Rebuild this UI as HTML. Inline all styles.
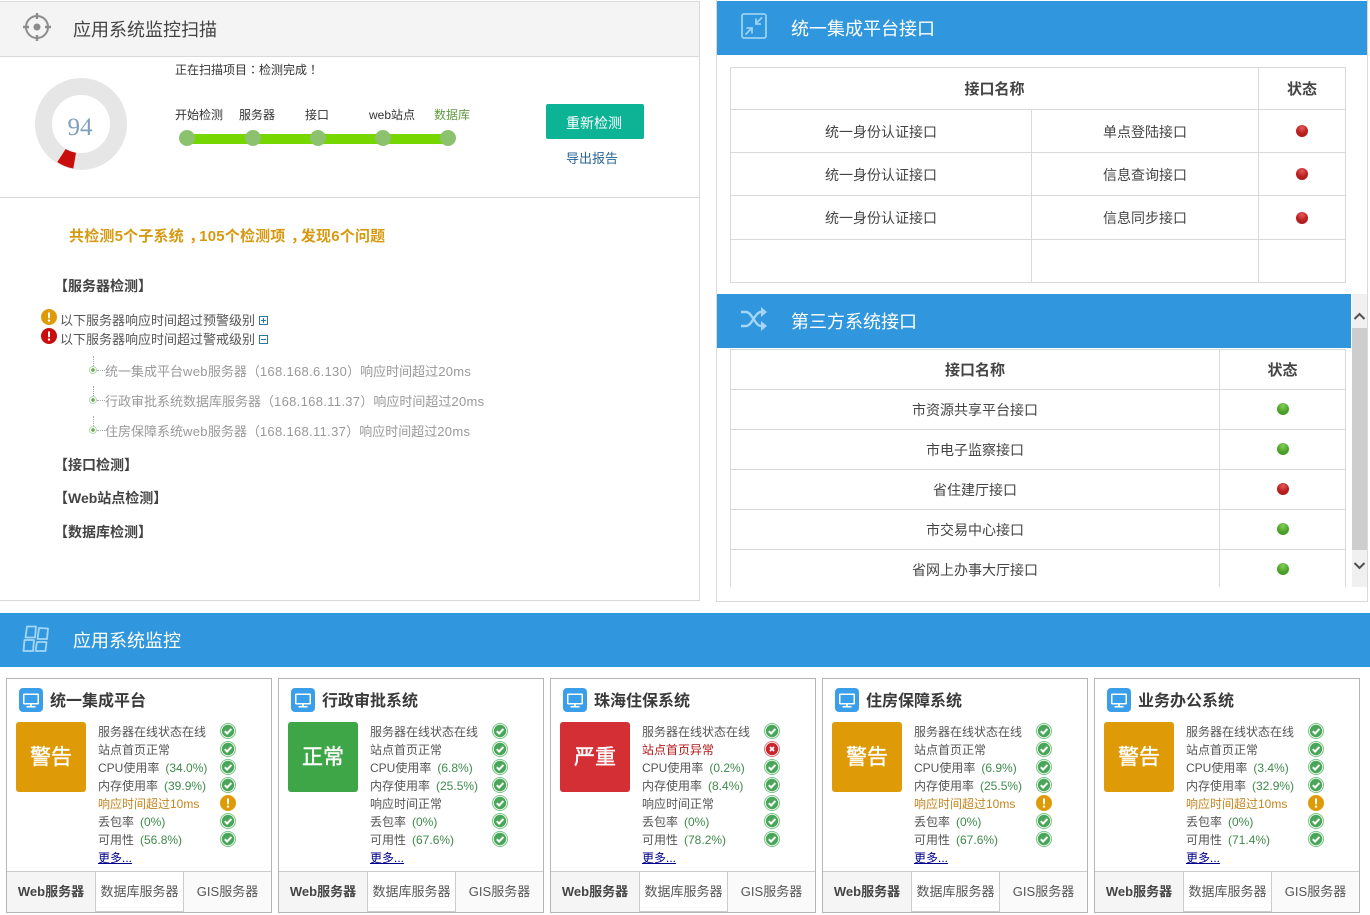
<!DOCTYPE html>
<html lang="zh"><head><meta charset="utf-8"><title>应用系统监控</title>
<style>
*{box-sizing:border-box}
html,body{margin:0;padding:0;background:#fff}
body{width:1370px;height:915px;position:relative;overflow:hidden;font-family:"Liberation Sans","Noto Sans CJK SC",sans-serif;color:#444;font-size:13px}
.a{position:absolute;white-space:nowrap}
.p{font-family:"Noto Sans CJK TC",sans-serif}
.cm{position:relative;left:5px}
.blue{background:#3096de;color:#fff}
.h{font-size:18px;line-height:26px;margin-top:1px}
.sec{font-weight:bold;font-size:14px;color:#444;left:54px;line-height:18px;margin-top:1px}
.lbl{font-size:12px;line-height:16px;top:107px;color:#333}
.node{width:16px;height:16px;border-radius:50%;background:#8cc26d;top:130px}
.tr{left:105px;color:#999;font-size:13px;line-height:18px;margin-top:1px}
.tr b{font-weight:normal;letter-spacing:.32px}
.dot{width:8px;height:8px;border-radius:50%;border:1px solid #b5d8b5;left:89px;background:radial-gradient(circle,#69a845 0 1.6px,#fff 2px)}
.vd{left:93px;width:1px;height:10px;border-left:1px dotted #aaa}
.hd{left:97px;width:8px;height:1px;border-top:1px dotted #aaa}
.ln{background:#d9d9d9}
.c{text-align:center;font-size:14px;line-height:20px;color:#444;margin-top:1px}
.th{font-weight:bold;font-size:15px;color:#444;margin-top:2px}
.led{width:12px;height:12px;border-radius:50%}
.g{background:radial-gradient(circle at 50% 25%,#86d05e 0,#4fa52a 50%,#3f8f22 100%)}
.r{background:radial-gradient(circle at 50% 25%,#e25a5a 0,#bd2020 50%,#9d1a1a 100%)}
.card{position:absolute;top:678px;width:266px;height:235px;border:1px solid #b5b5b5;background:#fff}
.ci{position:absolute;left:12px;top:9px;width:24px;height:24px;border-radius:4px;background:#3a9fe8}
.ct{position:absolute;left:43px;top:11px;font-size:16px;font-weight:bold;line-height:24px;color:#3a3a3a;white-space:nowrap}
.bd{position:absolute;left:9px;top:43px;width:70px;height:70px;border-radius:3px;color:#fff;font-size:21px;-webkit-text-stroke:.4px #fff;line-height:72px;text-align:center}
.list{position:absolute;left:91px;top:44px;width:160px;font-size:12px;line-height:18px;color:#555}
.list div{height:18px;white-space:nowrap}
.list span{color:#3f8a4c;margin-left:6px}
.list .w{color:#c5851f}.list .e{color:#b01818}
.list a{color:#00008b;text-decoration:underline}
.st{position:absolute;left:213px;width:16px;height:16px}
.tab{position:absolute;top:192px;height:41px;line-height:40px;font-size:13px;text-align:center;color:#555;background:#fafafa;border-top:1px solid #ccc;white-space:nowrap}
.t1{left:0;width:89px;background:#f5f5f5;font-weight:bold;color:#444;border-right:1px solid #ccc}
.t2{left:89px;width:88px;background:#fff;border-right:1px solid #ccc;border-bottom:1px solid #ccc}
.t3{left:177px;width:87px}
</style></head><body>
<svg width="0" height="0" style="position:absolute"><defs>
<symbol id="ok" viewBox="0 0 16 16"><circle cx="8" cy="8" r="8" fill="#7cc387"/><circle cx="8" cy="8" r="7" fill="#fff"/><circle cx="8" cy="8" r="6.200" fill="#4aa75a"/><path d="M4.800 8.200l2.300 2.300L11.400 5.900" fill="none" stroke="#fff" stroke-width="2"/></symbol>
<symbol id="wn" viewBox="0 0 16 16"><circle cx="8" cy="8" r="8" fill="#df9a08"/><rect x="7" y="3.200" width="2" height="6.200" rx="1" fill="#fff"/><circle cx="8" cy="11.600" r="1.200" fill="#fff"/></symbol>
<symbol id="er" viewBox="0 0 16 16"><circle cx="8" cy="8" r="8" fill="#d87a7a"/><circle cx="8" cy="8" r="7" fill="#fff"/><circle cx="8" cy="8" r="6.200" fill="#c9252f"/><path d="M6 6l4 4M10 6l-4 4" stroke="#fff" stroke-width="1.800"/></symbol>
<symbol id="rd" viewBox="0 0 16 16"><circle cx="8" cy="8" r="8" fill="#c90d0d"/><rect x="7" y="3.200" width="2" height="6.200" rx="1" fill="#fff"/><circle cx="8" cy="11.600" r="1.200" fill="#fff"/></symbol>
<symbol id="pc" viewBox="0 0 24 24"><rect x="4" y="5.500" width="16" height="11" rx="1.200" fill="#fff"/><rect x="5.500" y="7" width="13" height="8" fill="#3a9fe8"/><rect x="11" y="16" width="2" height="2" fill="#fff"/><rect x="7.500" y="18" width="9" height="1.500" fill="#fff"/></symbol>
</defs></svg>

<!-- left panel -->
<div class="a" style="left:0;top:1px;width:700px;height:56px;background:#f4f4f4;border-top:1px solid #d9d9d9;border-bottom:1px solid #d9d9d9;border-right:1px solid #d9d9d9"></div>
<svg class="a" style="left:22px;top:12px" width="30" height="30" viewBox="0 0 30 30"><circle cx="15" cy="15" r="11" fill="none" stroke="#8c8c8c" stroke-width="2"/><circle cx="15" cy="15" r="3.500" fill="#8c8c8c"/><path d="M15 1v6M15 23v6M1 15h6M23 15h6" stroke="#8c8c8c" stroke-width="2.400"/></svg>
<div class="a h" style="left:73px;top:16px;color:#444">应用系统监控扫描</div>
<div class="a" style="left:699px;top:57px;width:1px;height:544px;background:#d9d9d9"></div>
<div class="a" style="left:0;top:600px;width:700px;height:1px;background:#d9d9d9"></div>
<div class="a" style="left:0;top:197px;width:699px;height:1px;background:#d9d9d9"></div>

<svg class="a" style="left:35px;top:78px" width="92" height="92" viewBox="35 78 92 92"><circle cx="81" cy="124" r="37.500" fill="none" stroke="#e6e6e6" stroke-width="17"/><path d="M65.700 149Q70.500 151.800 76 152.700L73.300 168.500Q64.500 167 57.300 162Z" fill="#c90d0d"/></svg>
<div class="a" style="left:60px;top:111px;width:40px;text-align:center;font-family:'Liberation Serif',serif;font-size:25px;line-height:34px;color:#7f9fbf">94</div>

<div class="a" style="left:175px;top:62px;font-size:12px;line-height:16px;color:#333">正在扫描项目<span class="p" lang="zh-TW">：</span>检测完成<span class="p" lang="zh-TW">！</span></div>
<div class="a lbl" style="left:175px">开始检测</div>
<div class="a lbl" style="left:239px">服务器</div>
<div class="a lbl" style="left:305px">接口</div>
<div class="a lbl" style="left:369px">web站点</div>
<div class="a lbl" style="left:434px;color:#5f9a3e">数据库</div>
<div class="a" style="left:187px;top:134px;width:261px;height:10px;background:#76d600"></div>
<div class="a node" style="left:179px"></div><div class="a node" style="left:245px"></div><div class="a node" style="left:310px"></div><div class="a node" style="left:375px"></div><div class="a node" style="left:440px"></div>
<div class="a" style="left:546px;top:104px;width:98px;height:35px;padding-right:2px;border-radius:2px;background:#0cb394;color:#fff;font-size:14px;line-height:38px;text-align:center">重新检测</div>
<div class="a" style="left:566px;top:150px;font-size:13px;line-height:18px;color:#2a6496">导出报告</div>

<div class="a" style="left:69px;top:227px;font-size:15px;font-weight:bold;line-height:20px;letter-spacing:.2px;color:#d69a12">共检测5个子系统<span class="cm">，</span>105个检测项<span class="cm">，</span>发现6个问题</div>
<div class="a sec" style="top:276px">【服务器检测】</div>
<svg class="a" style="left:41px;top:309px" width="16" height="16"><use href="#wn"/></svg>
<svg class="a" style="left:41px;top:328px" width="16" height="16"><use href="#rd"/></svg>
<div class="a" style="left:60px;top:312px;line-height:18px;color:#555">以下服务器响应时间超过预警级别</div>
<div class="a" style="left:60px;top:331px;line-height:18px;color:#555">以下服务器响应时间超过警戒级别</div>
<svg class="a" style="left:259px;top:316px" width="9" height="9"><rect x=".5" y=".5" width="8" height="8" fill="none" stroke="#2a7a9e"/><path d="M2 4.500h5M4.500 2v5" stroke="#2a7a9e"/></svg>
<svg class="a" style="left:259px;top:335px" width="9" height="9"><rect x=".5" y=".5" width="8" height="8" fill="none" stroke="#2a7a9e"/><path d="M2 4.500h5" stroke="#2a7a9e"/></svg>
<div class="a vd" style="top:356px"></div><div class="a dot" style="top:366px"></div><div class="a hd" style="top:370px"></div>
<div class="a vd" style="top:386px"></div><div class="a dot" style="top:396px"></div><div class="a hd" style="top:400px"></div>
<div class="a vd" style="top:416px"></div><div class="a dot" style="top:426px"></div><div class="a hd" style="top:430px"></div>
<div class="a tr" style="top:361px">统一集成平台<b>web</b>服务器<span class="p" lang="zh-TW">（</span><b>168.168.6.130</b><span class="p" lang="zh-TW">）</span>响应时间超过<b>20ms</b></div>
<div class="a tr" style="top:391px">行政审批系统数据库服务器<span class="p" lang="zh-TW">（</span><b>168.168.11.37</b><span class="p" lang="zh-TW">）</span>响应时间超过<b>20ms</b></div>
<div class="a tr" style="top:421px">住房保障系统<b>web</b>服务器<span class="p" lang="zh-TW">（</span><b>168.168.11.37</b><span class="p" lang="zh-TW">）</span>响应时间超过<b>20ms</b></div>
<div class="a sec" style="top:455px">【接口检测】</div>
<div class="a sec" style="top:488px">【Web站点检测】</div>
<div class="a sec" style="top:522px">【数据库检测】</div>

<!-- right panel -->
<div class="a" style="left:716px;top:0;width:652px;height:602px;border:1px solid #d9d9d9;border-top:0"></div>
<div class="a blue" style="left:717px;top:1px;width:650px;height:54px"></div>
<svg class="a" style="left:741px;top:12px" width="26" height="27" viewBox="0 0 26 27"><rect x="1" y="2" width="24" height="24" rx="2" fill="none" stroke="#9ad2f5" stroke-width="1.800"/><path d="M4.500 22.500l6-6M5.500 16h5.500v5.500M21 5.500l-6 6M20 12h-5V6.500" fill="none" stroke="#9ad2f5" stroke-width="1.800"/></svg>
<div class="a h" style="left:791px;top:15px;color:#fff">统一集成平台接口</div>

<div class="a ln" style="left:730px;top:67px;width:616px;height:1px"></div>
<div class="a ln" style="left:730px;top:109px;width:616px;height:1px"></div>
<div class="a ln" style="left:730px;top:152px;width:616px;height:1px"></div>
<div class="a ln" style="left:730px;top:195px;width:616px;height:1px"></div>
<div class="a ln" style="left:730px;top:239px;width:616px;height:1px"></div>
<div class="a ln" style="left:730px;top:282px;width:616px;height:1px"></div>
<div class="a ln" style="left:730px;top:67px;width:1px;height:216px"></div>
<div class="a ln" style="left:1031px;top:110px;width:1px;height:173px"></div>
<div class="a ln" style="left:1258px;top:67px;width:1px;height:216px"></div>
<div class="a ln" style="left:1345px;top:67px;width:1px;height:216px"></div>
<div class="a c th" style="left:731px;top:78px;width:527px">接口名称</div>
<div class="a c th" style="left:1259px;top:78px;width:86px">状态</div>
<div class="a c" style="left:731px;top:121px;width:300px">统一身份认证接口</div>
<div class="a c" style="left:1032px;top:121px;width:226px">单点登陆接口</div>
<div class="a c" style="left:731px;top:164px;width:300px">统一身份认证接口</div>
<div class="a c" style="left:1032px;top:164px;width:226px">信息查询接口</div>
<div class="a c" style="left:731px;top:207px;width:300px">统一身份认证接口</div>
<div class="a c" style="left:1032px;top:207px;width:226px">信息同步接口</div>
<div class="a led r" style="left:1296px;top:125px"></div>
<div class="a led r" style="left:1296px;top:168px"></div>
<div class="a led r" style="left:1296px;top:212px"></div>

<div class="a blue" style="left:717px;top:294px;width:634px;height:54px"></div>
<svg class="a" style="left:740px;top:307px" width="28" height="24" viewBox="0 0 28 24"><path d="M1 5h5c6 0 9 14 15 14h2M1 19h5c6 0 9-14 15-14h2" fill="none" stroke="#a5d6f5" stroke-width="2.400"/><path d="M21 0l6 5-6 5zM21 14l6 5-6 5z" fill="#a5d6f5"/></svg>
<div class="a h" style="left:791px;top:308px;color:#fff">第三方系统接口</div>

<div class="a ln" style="left:730px;top:349px;width:616px;height:1px"></div>
<div class="a ln" style="left:730px;top:389px;width:616px;height:1px"></div>
<div class="a ln" style="left:730px;top:429px;width:616px;height:1px"></div>
<div class="a ln" style="left:730px;top:469px;width:616px;height:1px"></div>
<div class="a ln" style="left:730px;top:509px;width:616px;height:1px"></div>
<div class="a ln" style="left:730px;top:549px;width:616px;height:1px"></div>
<div class="a ln" style="left:730px;top:349px;width:1px;height:238px"></div>
<div class="a ln" style="left:1219px;top:349px;width:1px;height:238px"></div>
<div class="a ln" style="left:1345px;top:349px;width:1px;height:238px"></div>
<div class="a c th" style="left:731px;top:359px;width:488px">接口名称</div>
<div class="a c th" style="left:1220px;top:359px;width:125px">状态</div>
<div class="a c" style="left:731px;top:399px;width:488px">市资源共享平台接口</div>
<div class="a c" style="left:731px;top:439px;width:488px">市电子监察接口</div>
<div class="a c" style="left:731px;top:479px;width:488px">省住建厅接口</div>
<div class="a c" style="left:731px;top:519px;width:488px">市交易中心接口</div>
<div class="a c" style="left:731px;top:559px;width:488px">省网上办事大厅接口</div>
<div class="a led g" style="left:1277px;top:403px"></div>
<div class="a led g" style="left:1277px;top:443px"></div>
<div class="a led r" style="left:1277px;top:483px"></div>
<div class="a led g" style="left:1277px;top:523px"></div>
<div class="a led g" style="left:1277px;top:563px"></div>
<div class="a" style="left:1352px;top:294px;width:15px;height:293px;background:#f0f0f0"></div>
<div class="a" style="left:1352px;top:328px;width:15px;height:222px;background:#cdcdcd"></div>
<svg class="a" style="left:1353px;top:311px" width="13" height="10"><path d="M1.500 8L6.500 3l5 5" fill="none" stroke="#505050" stroke-width="2"/></svg>
<svg class="a" style="left:1353px;top:561px" width="13" height="10"><path d="M1.500 2l5 5 5-5" fill="none" stroke="#505050" stroke-width="2"/></svg>

<!-- bottom -->
<div class="a blue" style="left:0;top:613px;width:1370px;height:54px"></div>
<svg class="a" style="left:22px;top:625px" width="28" height="28" viewBox="0 0 28 28" fill="none" stroke="#a5d6f5" stroke-width="1.800" stroke-linejoin="round"><path d="M5 1.500h9L13 12.500H3.500zM17 3l9 .5-1 10.500h-9.500zM2.500 15H12L11 26H1.500zM15 17h9.500l-1 9H13.500z"/></svg>
<div class="a h" style="left:73px;top:627px;color:#fff">应用系统监控</div>

<div class="card" style="left:6px"><div class="ci"><svg width="24" height="24"><use href="#pc"/></svg></div><div class="ct">统一集成平台</div><div class="bd" style="background:#df9a08">警告</div>
<div class="list"><div>服务器在线状态在线</div><div>站点首页正常</div><div>CPU使用率<span>(34.0%)</span></div><div>内存使用率<span>(39.9%)</span></div><div class="w">响应时间超过10ms</div><div>丢包率<span>(0%)</span></div><div>可用性<span>(56.8%)</span></div><div><a>更多...</a></div></div>
<svg class="st" style="top:44px"><use href="#ok"/></svg><svg class="st" style="top:62px"><use href="#ok"/></svg><svg class="st" style="top:80px"><use href="#ok"/></svg><svg class="st" style="top:98px"><use href="#ok"/></svg><svg class="st" style="top:116px"><use href="#wn"/></svg><svg class="st" style="top:134px"><use href="#ok"/></svg><svg class="st" style="top:152px"><use href="#ok"/></svg>
<div class="tab t1">Web服务器</div><div class="tab t2">数据库服务器</div><div class="tab t3">GIS服务器</div></div>

<div class="card" style="left:278px"><div class="ci"><svg width="24" height="24"><use href="#pc"/></svg></div><div class="ct">行政审批系统</div><div class="bd" style="background:#3fa648">正常</div>
<div class="list"><div>服务器在线状态在线</div><div>站点首页正常</div><div>CPU使用率<span>(6.8%)</span></div><div>内存使用率<span>(25.5%)</span></div><div>响应时间正常</div><div>丢包率<span>(0%)</span></div><div>可用性<span>(67.6%)</span></div><div><a>更多...</a></div></div>
<svg class="st" style="top:44px"><use href="#ok"/></svg><svg class="st" style="top:62px"><use href="#ok"/></svg><svg class="st" style="top:80px"><use href="#ok"/></svg><svg class="st" style="top:98px"><use href="#ok"/></svg><svg class="st" style="top:116px"><use href="#ok"/></svg><svg class="st" style="top:134px"><use href="#ok"/></svg><svg class="st" style="top:152px"><use href="#ok"/></svg>
<div class="tab t1">Web服务器</div><div class="tab t2">数据库服务器</div><div class="tab t3">GIS服务器</div></div>

<div class="card" style="left:550px"><div class="ci"><svg width="24" height="24"><use href="#pc"/></svg></div><div class="ct">珠海住保系统</div><div class="bd" style="background:#d32f34">严重</div>
<div class="list"><div>服务器在线状态在线</div><div class="e">站点首页异常</div><div>CPU使用率<span>(0.2%)</span></div><div>内存使用率<span>(8.4%)</span></div><div>响应时间正常</div><div>丢包率<span>(0%)</span></div><div>可用性<span>(78.2%)</span></div><div><a>更多...</a></div></div>
<svg class="st" style="top:44px"><use href="#ok"/></svg><svg class="st" style="top:62px"><use href="#er"/></svg><svg class="st" style="top:80px"><use href="#ok"/></svg><svg class="st" style="top:98px"><use href="#ok"/></svg><svg class="st" style="top:116px"><use href="#ok"/></svg><svg class="st" style="top:134px"><use href="#ok"/></svg><svg class="st" style="top:152px"><use href="#ok"/></svg>
<div class="tab t1">Web服务器</div><div class="tab t2">数据库服务器</div><div class="tab t3">GIS服务器</div></div>

<div class="card" style="left:822px"><div class="ci"><svg width="24" height="24"><use href="#pc"/></svg></div><div class="ct">住房保障系统</div><div class="bd" style="background:#df9a08">警告</div>
<div class="list"><div>服务器在线状态在线</div><div>站点首页正常</div><div>CPU使用率<span>(6.9%)</span></div><div>内存使用率<span>(25.5%)</span></div><div class="w">响应时间超过10ms</div><div>丢包率<span>(0%)</span></div><div>可用性<span>(67.6%)</span></div><div><a>更多...</a></div></div>
<svg class="st" style="top:44px"><use href="#ok"/></svg><svg class="st" style="top:62px"><use href="#ok"/></svg><svg class="st" style="top:80px"><use href="#ok"/></svg><svg class="st" style="top:98px"><use href="#ok"/></svg><svg class="st" style="top:116px"><use href="#wn"/></svg><svg class="st" style="top:134px"><use href="#ok"/></svg><svg class="st" style="top:152px"><use href="#ok"/></svg>
<div class="tab t1">Web服务器</div><div class="tab t2">数据库服务器</div><div class="tab t3">GIS服务器</div></div>

<div class="card" style="left:1094px"><div class="ci"><svg width="24" height="24"><use href="#pc"/></svg></div><div class="ct">业务办公系统</div><div class="bd" style="background:#df9a08">警告</div>
<div class="list"><div>服务器在线状态在线</div><div>站点首页正常</div><div>CPU使用率<span>(3.4%)</span></div><div>内存使用率<span>(32.9%)</span></div><div class="w">响应时间超过10ms</div><div>丢包率<span>(0%)</span></div><div>可用性<span>(71.4%)</span></div><div><a>更多...</a></div></div>
<svg class="st" style="top:44px"><use href="#ok"/></svg><svg class="st" style="top:62px"><use href="#ok"/></svg><svg class="st" style="top:80px"><use href="#ok"/></svg><svg class="st" style="top:98px"><use href="#ok"/></svg><svg class="st" style="top:116px"><use href="#wn"/></svg><svg class="st" style="top:134px"><use href="#ok"/></svg><svg class="st" style="top:152px"><use href="#ok"/></svg>
<div class="tab t1">Web服务器</div><div class="tab t2">数据库服务器</div><div class="tab t3">GIS服务器</div></div>
</body></html>
